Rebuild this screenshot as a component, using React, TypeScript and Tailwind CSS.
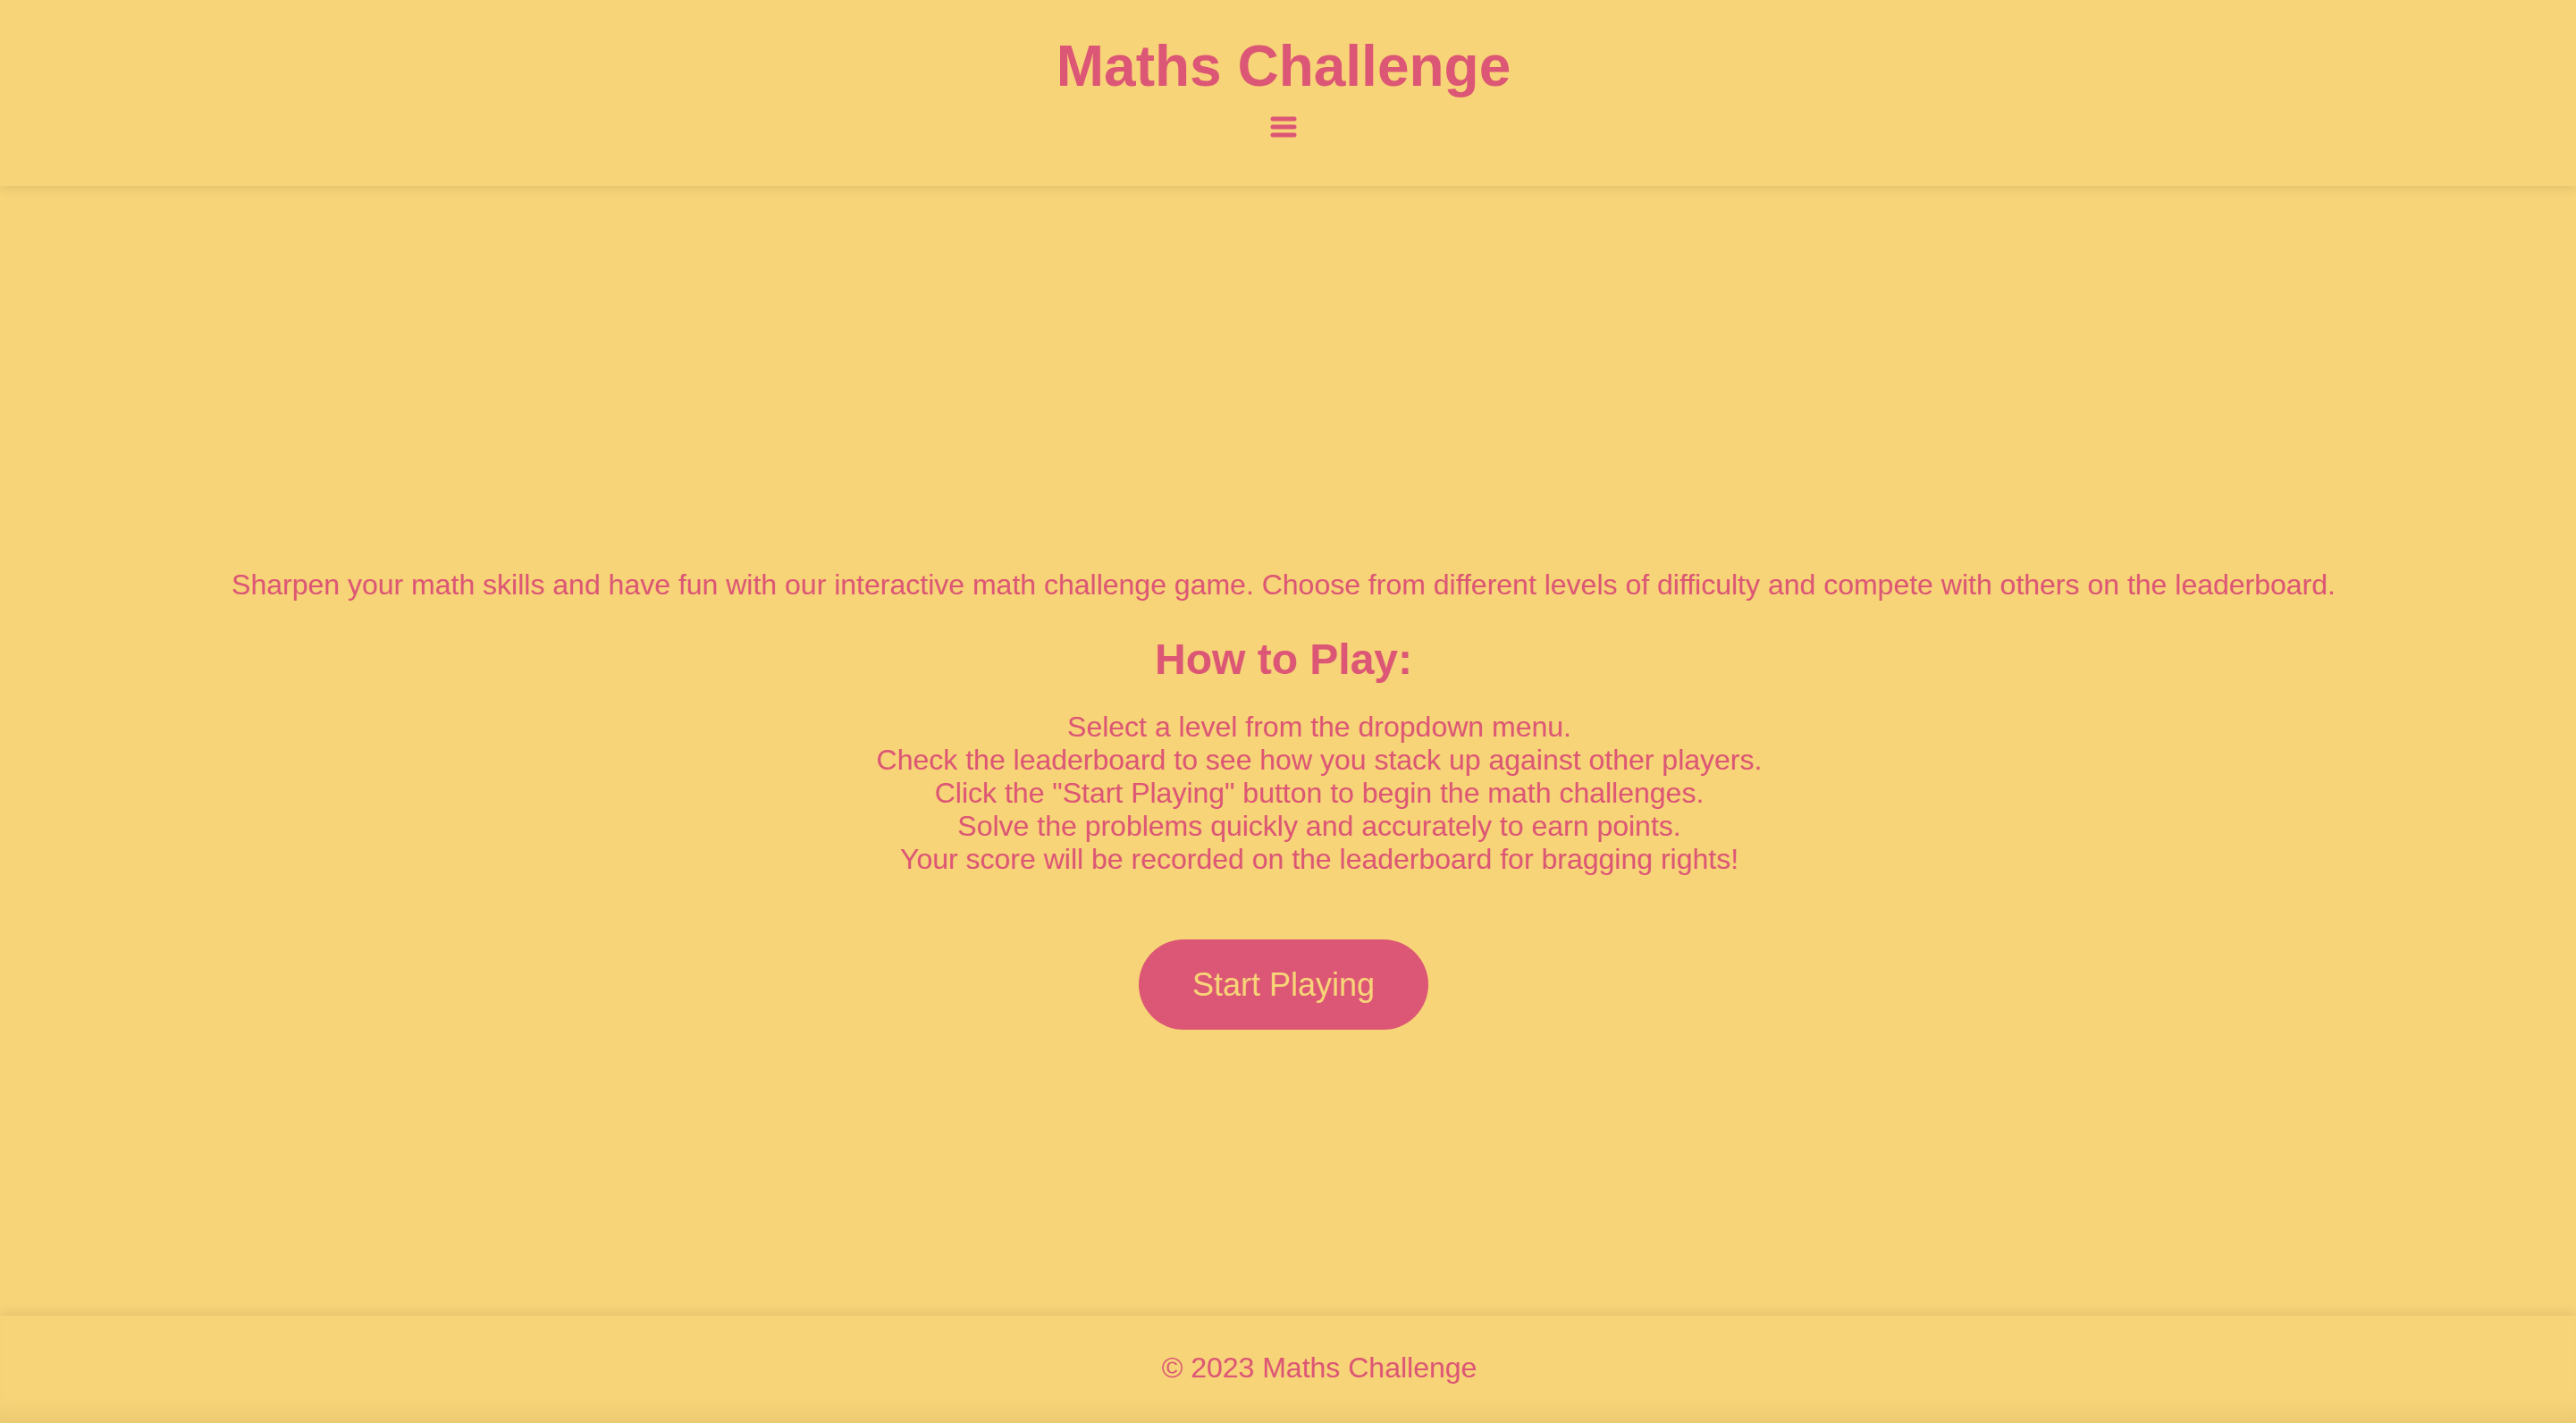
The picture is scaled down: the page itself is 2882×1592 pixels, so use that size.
import React from 'react';

const steps = [
  'Select a level from the dropdown menu.',
  'Check the leaderboard to see how you stack up against other players.',
  'Click the "Start Playing" button to begin the math challenges.',
  'Solve the problems quickly and accurately to earn points.',
  'Your score will be recorded on the leaderboard for bragging rights!',
];

const MenuIcon = () => (
  <svg width="30" height="24" viewBox="0 0 30 24" fill="none">
    <line x1="3" y1="3" x2="27" y2="3" stroke="#dc5675" strokeWidth="5" strokeLinecap="round" />
    <line x1="3" y1="12" x2="27" y2="12" stroke="#dc5675" strokeWidth="5" strokeLinecap="round" />
    <line x1="3" y1="21" x2="27" y2="21" stroke="#dc5675" strokeWidth="5" strokeLinecap="round" />
  </svg>
);

export default function App() {
  return (
    <div
      className="min-h-screen flex flex-col bg-[#f7d478] text-[#dc5675] pr-[10px]"
      style={{ fontFamily: '"Liberation Sans", Arial, sans-serif' }}
    >
      {/* En-tête */}
      <header className="relative z-10 flex flex-col items-center pt-[38px] pb-[54px] bg-[#f7d478] shadow-[0_3px_12px_rgba(0,0,0,0.09)] -mr-[10px] pr-[10px]">
        <h1 className="text-[64px] leading-[72px] font-bold">Maths Challenge</h1>
        <button className="mt-[20px] flex items-center justify-center">
          <MenuIcon />
        </button>
      </header>

      {/* Contenu */}
      <main className="flex-1 flex flex-col items-center pt-[428px] text-center">
        <p className="text-[32px] leading-[37px]">
          Sharpen your math skills and have fun with our interactive math challenge game. Choose from different levels of difficulty and compete with others on the leaderboard.
        </p>
        <h2 className="mt-[37px] text-[48px] leading-[55px] font-bold">How to Play:</h2>
        <ul className="mt-[30px] pl-[80px] text-[32px] leading-[37px]">
          {steps.map((step) => (
            <li key={step}>{step}</li>
          ))}
        </ul>
        <button className="mt-[71px] px-[60px] py-[30px] rounded-full bg-[#dc5675] text-[#f7d478] text-[36px] leading-[41px]">
          Start Playing
        </button>
      </main>

      {/* Pied de page */}
      <footer className="relative z-10 pt-[40px] pb-[43px] pl-[80px] text-center text-[32px] leading-[37px] bg-[#f7d478] -mr-[10px] pr-[10px] shadow-[0_-3px_12px_rgba(0,0,0,0.09),inset_0_-24px_24px_-16px_rgba(0,0,0,0.06)]">
        © 2023 Maths Challenge
      </footer>
    </div>
  );
}
